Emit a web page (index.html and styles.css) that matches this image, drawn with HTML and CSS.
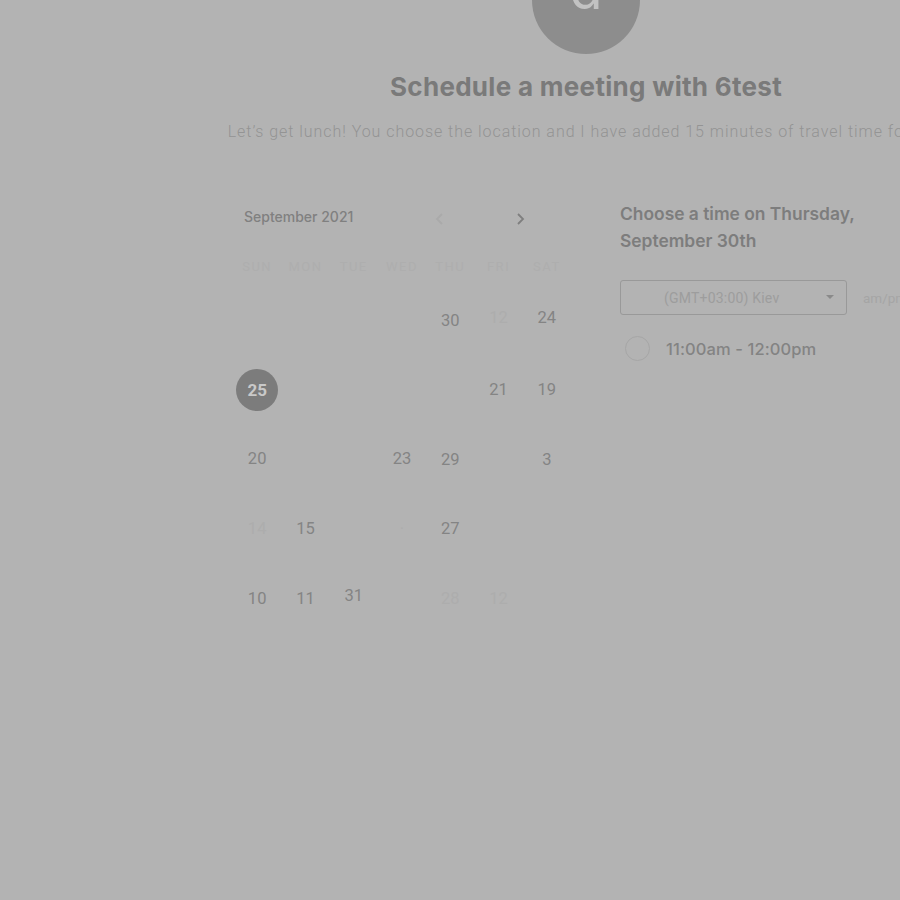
FILE: index.html
```html
<!DOCTYPE html>
<html>
<head>
<meta charset="utf-8">
<link rel="stylesheet" href="styles.css">
</head>
<body>
<div class="page">
  <header class="header">
    <div class="avatar"><span>d</span></div>
    <h1 class="title">Schedule a meeting with 6test</h1>
    <p class="subtitle">Let’s get lunch! You choose the location and I have added 15 minutes of travel time for me.</p>
  </header>
  <main class="main">
    <section class="calendar">
      <div class="cal-head">
        <span class="month">September 2021</span>
        <div class="arrows">
          <svg class="arrow faint" width="10" height="14" viewBox="0 0 10 14"><path d="M7 2 L2 7 L7 12" fill="none" stroke="currentColor" stroke-width="1.8"/></svg>
          <svg class="arrow" width="10" height="14" viewBox="0 0 10 14"><path d="M3 2 L8 7 L3 12" fill="none" stroke="currentColor" stroke-width="1.8"/></svg>
        </div>
      </div>
      <div class="weekdays">
        <span>SUN</span><span>MON</span><span>TUE</span><span>WED</span><span>THU</span><span>FRI</span><span>SAT</span>
      </div>
      <div class="days">
        <span></span><span></span><span></span><span></span><span class="d">30</span><span class="d faint up">12</span><span class="d up">24</span>
        <span class="d"><b class="sel">25</b></span><span></span><span></span><span></span><span></span><span class="d">21</span><span class="d">19</span>
        <span class="d up1">20</span><span></span><span></span><span class="d up1">23</span><span class="d">29</span><span></span><span class="d">3</span>
        <span class="d faint">14</span><span class="d">15</span><span></span><span class="d faint">·</span><span class="d">27</span><span></span><span></span>
        <span class="d">10</span><span class="d">11</span><span class="d up">31</span><span></span><span class="d faint">28</span><span class="d faint">12</span><span></span>
      </div>
    </section>
    <section class="times">
      <h2 class="choose">Choose a time on Thursday,<br>September 30th</h2>
      <div class="tz-row">
        <div class="select">
          <span class="select-text">(GMT+03:00) Kiev</span>
          <svg class="caret" width="8" height="5" viewBox="0 0 8 5"><path d="M0 0 L8 0 L4 4 Z" fill="currentColor"/></svg>
        </div>
        <span class="ampm">am/pm</span>
      </div>
      <div class="slot">
        <span class="radio"></span>
        <span class="slot-text">11:00am - 12:00pm</span>
      </div>
    </section>
  </main>
</div>
</body>
</html>
```
FILE: styles.css
```css
html, body {
  margin: 0;
  padding: 0;
  background: #b3b3b3;
  overflow: hidden;
}
.page {
  width: 1172px;
  height: 900px;
}
.header {
  display: flex;
  flex-direction: column;
  align-items: center;
}
.avatar {
  width: 108px;
  height: 108px;
  border-radius: 50%;
  background: #8d8d8d;
  margin-top: -54px;
  display: flex;
  justify-content: center;
  align-items: flex-end;
  position: relative;
}
.avatar span {
  font-family: "Inter", sans-serif;
  font-size: 54px;
  color: #c2c2c2;
  line-height: 1;
  margin-bottom: 37px;
}
.title {
  font-family: "Inter", sans-serif;
  font-weight: 700;
  font-size: 26px;
  color: #7a7a7a;
  margin: 17px 0 0;
  line-height: 32px;
  letter-spacing: 0.3px;
}
.subtitle {
  font-family: "Roboto", sans-serif;
  font-size: 16px;
  font-weight: 300;
  color: #949494;
  margin: 19px 0 0;
  line-height: 20px;
  letter-spacing: 0.95px;
  white-space: nowrap;
}
.main {
  display: flex;
  margin-top: 65px;
  padding-left: 233px;
  gap: 49px;
}
.calendar {
  width: 338px;
}
.cal-head {
  display: flex;
  align-items: center;
  justify-content: space-between;
  padding-left: 11px;
  height: 24px;
}
.month {
  font-family: "Inter", sans-serif;
  font-weight: 500;
  font-size: 14px;
  color: #808080;
  margin-top: -6px;
}
.arrows {
  display: flex;
  gap: 70px;
  width: 98px;
  padding-right: 38px;
  color: #7f7f7f;
}
.arrow.faint {
  color: #aaaaaa;
}
.weekdays {
  display: grid;
  grid-template-columns: repeat(7, 1fr);
  margin-top: 25px;
  height: 20px;
  align-items: center;
}
.weekdays span {
  text-align: center;
  font-family: "Roboto", sans-serif;
  font-size: 13px;
  letter-spacing: 1.5px;
  color: #aeaeae;
}
.days {
  display: grid;
  grid-template-columns: repeat(7, 1fr);
  grid-auto-rows: 69.5px;
  margin-top: 24px;
}
.days span {
  display: flex;
  align-items: center;
  justify-content: center;
  font-family: "Roboto", sans-serif;
  font-size: 16.5px;
  color: #848484;
  height: 40px;
}
.days span.faint {
  color: #adadad;
}
.days span.up {
  margin-top: -3px;
}
.days span.up1 {
  margin-top: -1px;
}
.sel {
  width: 42px;
  height: 42px;
  border-radius: 50%;
  background: #7c7c7c;
  color: #c9c9c9;
  font-weight: 700;
  display: flex;
  align-items: center;
  justify-content: center;
  font-size: 17px;
}
.times {
  width: 300px;
}
.choose {
  font-family: "Inter", sans-serif;
  font-weight: 600;
  font-size: 17.4px;
  line-height: 27px;
  color: #7d7d7d;
  margin: -7px 0 0;
  white-space: nowrap;
}
.tz-row {
  display: flex;
  align-items: center;
  margin-top: 26px;
  gap: 16px;
}
.select {
  width: 225px;
  height: 33px;
  border: 1px solid #999999;
  border-radius: 3px;
  display: flex;
  align-items: center;
  position: relative;
  color: #9d9d9d;
}
.select-text {
  font-family: "Roboto", sans-serif;
  font-size: 14px;
  margin-left: 43px;
  letter-spacing: 0.2px;
}
.caret {
  margin-left: auto;
  margin-right: 12px;
  color: #8a8a8a;
}
.ampm {
  font-family: "Roboto", sans-serif;
  font-size: 13.5px;
  color: #a5a5a5;
  white-space: nowrap;
}
.slot {
  display: flex;
  align-items: center;
  margin-top: 21px;
  margin-left: 5px;
  gap: 16px;
}
.radio {
  width: 23px;
  height: 23px;
  border: 1px solid #a6a6a6;
  border-radius: 50%;
}
.slot-text {
  font-family: "Inter", sans-serif;
  font-weight: 500;
  font-size: 16.5px;
  color: #838383;
  letter-spacing: 0.1px;
}
```
